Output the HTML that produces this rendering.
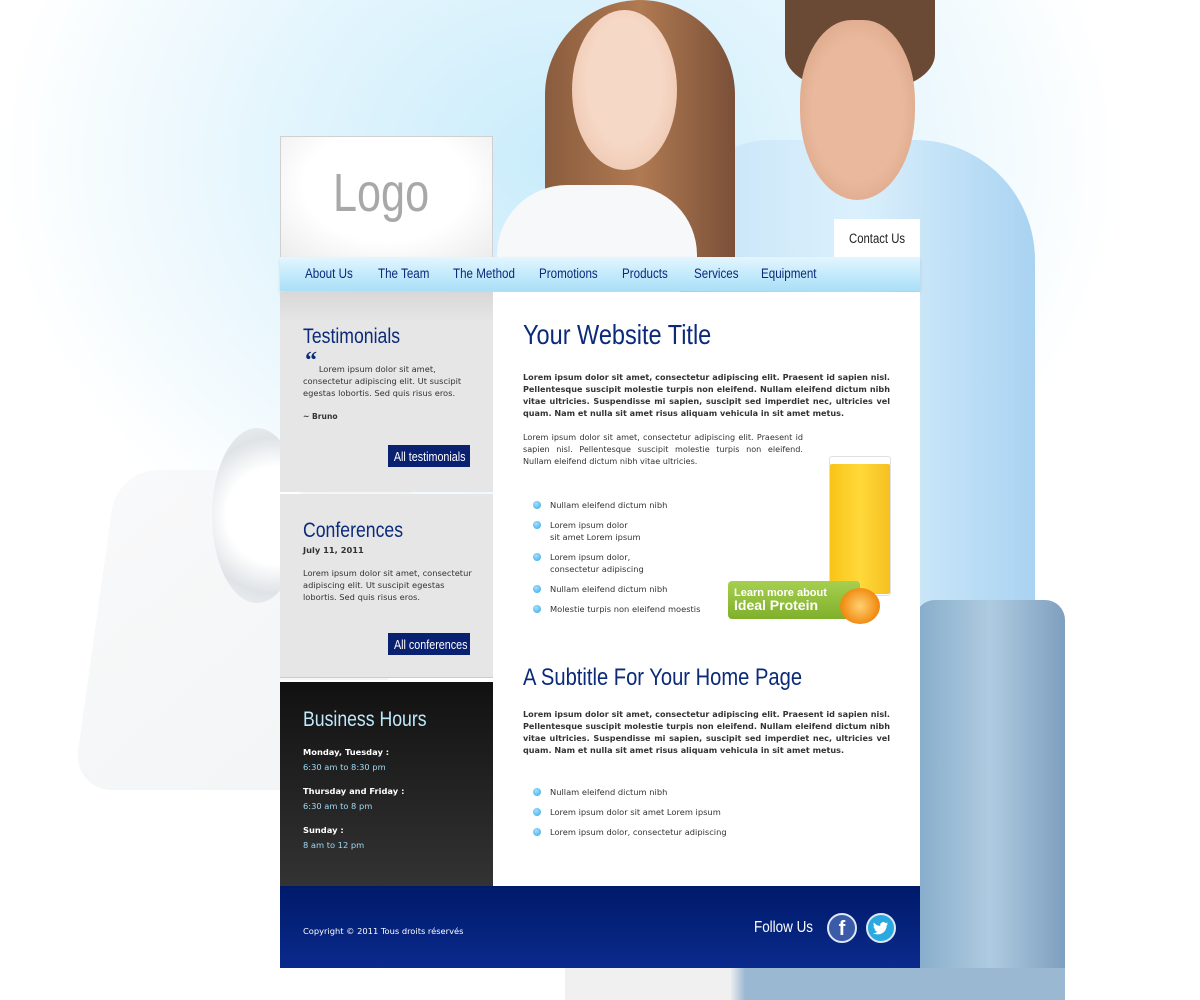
<!DOCTYPE html>
<html><head><meta charset="utf-8"><style>
*{margin:0;padding:0;box-sizing:border-box}
body{width:1200px;height:1000px;overflow:hidden;position:relative;background:#fff;font-family:"DejaVu Sans",Verdana,sans-serif;}
.bg{position:absolute;inset:0;background:radial-gradient(ellipse 560px 460px at 560px 160px,#c9ecfb 0%,#e3f5fd 50%,#fff 100%);}
.abs{position:absolute}
.h{font-family:"Liberation Sans",sans-serif;transform:scaleX(.84);transform-origin:0 0;white-space:nowrap}
.nav a{position:absolute;top:9px;color:#0b2a7a;font-size:13.5px;text-decoration:none;font-family:"Liberation Sans",sans-serif;transform:scaleX(.86);transform-origin:0 0;white-space:nowrap}
p.t{font-size:8.3px;line-height:12px;color:#333}
.b{font-weight:bold}
ul{list-style:none}
ul li{position:relative;padding-left:27px;font-size:8.3px;line-height:12px;color:#333;margin-bottom:8px}
ul li:before{content:"";position:absolute;left:10px;top:2px;width:8px;height:8px;border-radius:50%;background:radial-gradient(circle at 40% 35%,#9fe0ff,#3aa6e6)}
.btn{position:absolute;background:#0a2070;color:#fff;height:22px;line-height:22px;width:82px;text-align:center;overflow:hidden}
.btn span{display:inline-block;font-size:12.5px;font-family:"Liberation Sans",sans-serif;transform:scaleX(.86);white-space:nowrap}
</style></head><body>
<div class="bg"></div>
<div class="abs" style="left:95px;top:470px;width:300px;height:320px;border-radius:40px;background:linear-gradient(135deg,#f6f7f8,#eceff1);transform:skewX(-8deg);opacity:.7"></div>
<div class="abs" style="left:212px;top:428px;width:90px;height:175px;border-radius:50%;background:radial-gradient(circle at 70% 50%,#fff 45%,#dfe3e7 72%,#f2f4f5)"></div>
<div class="abs" style="left:680px;top:140px;width:355px;height:550px;border-radius:90px 120px 40px 40px;background:linear-gradient(90deg,#c6e4f8,#dbf0fc 50%,#a9d3f2)"></div>
<div class="abs" style="left:915px;top:600px;width:150px;height:400px;background:linear-gradient(90deg,#86acca,#aecbe0,#7f9fbf);border-radius:20px"></div>
<div class="abs" style="left:565px;top:968px;width:500px;height:32px;background:linear-gradient(90deg,#f0f0f0 0,#f0f0f0 33%,#9bb8d2 36%,#9bb8d2)"></div>
<div class="abs" style="left:785px;top:0;width:150px;height:90px;border-radius:0 0 40% 40%;background:#6a4a35"></div>
<div class="abs" style="left:800px;top:20px;width:115px;height:180px;border-radius:45% 45% 50% 50%;background:radial-gradient(ellipse at 50% 50%,#eab99d 55%,#d29a7c)"></div>
<div class="abs" style="left:545px;top:0;width:190px;height:257px;border-radius:95px 95px 0 0;background:linear-gradient(90deg,#8a5c3e,#b07a52 50%,#7a5038)"></div>
<div class="abs" style="left:572px;top:10px;width:105px;height:160px;border-radius:50%;background:radial-gradient(ellipse at 50% 45%,#f6d8c6 50%,#e8bca3)"></div>
<div class="abs" style="left:497px;top:185px;width:200px;height:72px;border-radius:70px 70px 0 0;background:#f6f8fa"></div>
<div class="abs" style="left:280px;top:136px;width:213px;height:122px;border:1px solid #d0d0d0;background:radial-gradient(ellipse at 50% 40%,#fff 55%,#ececec)"></div>
<div class="abs h" style="left:333px;top:162px;font-size:54px;color:#a8a8a8;transform:scaleX(.8)">Logo</div>
<div class="abs" style="left:834px;top:219px;width:86px;height:38px;background:#fff"></div>
<div class="abs h" style="left:849px;top:231px;font-size:13.5px;color:#222">Contact Us</div>
<div class="abs nav" style="left:280px;top:257px;width:640px;height:34px;background:linear-gradient(#e3f6fe,#bfe8fb 60%,#aadff7);box-shadow:0 2px 3px rgba(0,0,0,.12)">
<a style="left:25px">About Us</a><a style="left:98px">The Team</a><a style="left:173px">The Method</a><a style="left:259px">Promotions</a><a style="left:342px">Products</a><a style="left:414px">Services</a><a style="left:481px">Equipment</a></div>
<div class="abs" style="left:280px;top:292px;width:213px;height:200px;background:linear-gradient(#d8d8d8,#e6e6e6 15%,#e6e6e6)"></div>
<div class="abs" style="left:280px;top:494px;width:213px;height:184px;background:#e6e6e6;border-bottom:1px solid #ccc"></div>
<div class="abs h" style="left:303px;top:325px;font-size:21px;color:#0b2a7a">Testimonials</div>
<div class="abs" style="left:305px;top:348px;font-size:24px;color:#0b2a7a;font-family:'Liberation Serif',serif;font-weight:bold">“</div>
<p class="abs t" style="left:303px;top:363px;width:180px">&nbsp;&nbsp;&nbsp;&nbsp;&nbsp;&nbsp;Lorem ipsum dolor sit amet, consectetur adipiscing elit. Ut suscipit egestas lobortis. Sed quis risus eros.</p>
<p class="abs t b" style="left:303px;top:411px;font-size:7.6px">~ Bruno</p>
<div class="btn" style="left:388px;top:445px"><span>All testimonials</span></div>
<div class="abs h" style="left:303px;top:519px;font-size:21px;color:#0b2a7a">Conferences</div>
<p class="abs t b" style="left:303px;top:544px">July 11, 2011</p>
<p class="abs t" style="left:303px;top:567px;width:170px">Lorem ipsum dolor sit amet, consectetur adipiscing elit. Ut suscipit egestas lobortis. Sed quis risus eros.</p>
<div class="btn" style="left:388px;top:633px"><span>All conferences</span></div>
<div class="abs" style="left:280px;top:680px;width:213px;height:206px;background:linear-gradient(#111,#333);border-top:2px solid #fff"></div>
<div class="abs h" style="left:303px;top:708px;font-size:21px;color:#bfe8fb">Business Hours</div>
<div class="abs" style="left:303px;top:745px;font-size:8.3px;line-height:15px;color:#fff">
<div class="b">Monday, Tuesday :</div><div style="color:#9fd8f5">6:30 am to 8:30 pm</div>
<div class="b" style="margin-top:9px">Thursday and Friday :</div><div style="color:#9fd8f5">6:30 am to 8 pm</div>
<div class="b" style="margin-top:9px">Sunday :</div><div style="color:#9fd8f5">8 am to 12 pm</div></div>
<div class="abs" style="left:493px;top:292px;width:427px;height:594px;background:#fff"></div>
<div class="abs h" style="left:523px;top:319px;font-size:28px;color:#0b2a7a">Your Website Title</div>
<p class="abs t b" style="left:523px;top:371px;width:367px;text-align:justify;font-size:8.1px">Lorem ipsum dolor sit amet, consectetur adipiscing elit. Praesent id sapien nisl. Pellentesque suscipit molestie turpis non eleifend. Nullam eleifend dictum nibh vitae ultricies. Suspendisse mi sapien, suscipit sed imperdiet nec, ultricies vel quam. Nam et nulla sit amet risus aliquam vehicula in sit amet metus.</p>
<p class="abs t" style="left:523px;top:431px;width:280px;text-align:justify;font-size:8.1px">Lorem ipsum dolor sit amet, consectetur adipiscing elit. Praesent id sapien nisl. Pellentesque suscipit molestie turpis non eleifend. Nullam eleifend dictum nibh vitae ultricies.</p>
<ul class="abs" style="left:523px;top:499px;width:200px">
<li>Nullam eleifend dictum nibh</li>
<li>Lorem ipsum dolor<br>sit amet Lorem ipsum</li>
<li>Lorem ipsum dolor,<br>consectetur adipiscing</li>
<li>Nullam eleifend dictum nibh</li>
<li>Molestie turpis non eleifend moestis</li></ul>
<div class="abs" style="left:829px;top:456px;width:62px;height:140px;border:1px solid #e0e0e0;border-radius:3px;background:#fff"></div>
<div class="abs" style="left:830px;top:464px;width:60px;height:130px;background:linear-gradient(90deg,#f8c418,#ffd93a 50%,#f5c020);border-radius:2px"></div>
<div class="abs" style="left:728px;top:581px;width:132px;height:38px;border-radius:4px;background:linear-gradient(#a7cf4f,#7fb02c);color:#fff;font-family:'Liberation Sans',sans-serif;font-weight:bold;padding:6px 0 0 6px;line-height:12px"><div style="font-size:11px">Learn more about</div><div style="font-size:14px">Ideal Protein</div></div>
<div class="abs" style="left:840px;top:588px;width:40px;height:36px;border-radius:50%;background:radial-gradient(circle,#ffd070,#f08a10 70%);"></div>
<div class="abs h" style="left:523px;top:664px;font-size:24px;color:#0b2a7a">A Subtitle For Your Home Page</div>
<p class="abs t b" style="left:523px;top:708px;width:367px;text-align:justify;font-size:8.1px">Lorem ipsum dolor sit amet, consectetur adipiscing elit. Praesent id sapien nisl. Pellentesque suscipit molestie turpis non eleifend. Nullam eleifend dictum nibh vitae ultricies. Suspendisse mi sapien, suscipit sed imperdiet nec, ultricies vel quam. Nam et nulla sit amet risus aliquam vehicula in sit amet metus.</p>
<ul class="abs" style="left:523px;top:786px;width:300px">
<li>Nullam eleifend dictum nibh</li>
<li>Lorem ipsum dolor sit amet Lorem ipsum</li>
<li>Lorem ipsum dolor, consectetur adipiscing</li></ul>
<div class="abs" style="left:280px;top:886px;width:640px;height:82px;background:linear-gradient(#001a6a,#0a2a8c)"></div>
<div class="abs" style="left:303px;top:926px;font-size:8.3px;color:#fff">Copyright © 2011 Tous droits réservés</div>
<div class="abs h" style="left:754px;top:919px;font-size:16px;color:#fff">Follow Us</div>
<div class="abs" style="left:827px;top:913px;width:30px;height:30px;border-radius:50%;background:#3b5ba8;border:2px solid #dfe8f5;color:#fff;font:bold 20px 'Liberation Sans',sans-serif;text-align:center;line-height:28px">f</div>
<div class="abs" style="left:866px;top:913px;width:30px;height:30px;border-radius:50%;background:#2aa9e0;border:2px solid #dfe8f5"><svg width="26" height="26" viewBox="0 0 26 26"><path d="M20 8.5c-.6.3-1.2.4-1.8.5.7-.4 1.1-1 1.4-1.7-.6.4-1.3.6-2 .8a3.1 3.1 0 0 0-5.3 2.8c-2.6-.1-4.9-1.4-6.4-3.3-.8 1.4-.4 3.2 1 4.1-.5 0-1-.2-1.4-.4 0 1.5 1.1 2.8 2.5 3.1-.5.1-.9.2-1.4.1.4 1.2 1.6 2.1 2.9 2.2A6.3 6.3 0 0 1 5 18c1.4.9 3 1.4 4.8 1.4 5.8 0 9-4.8 8.9-9.1.6-.5 1-1 1.3-1.8z" fill="#fff"/></svg></div>
</body></html>
